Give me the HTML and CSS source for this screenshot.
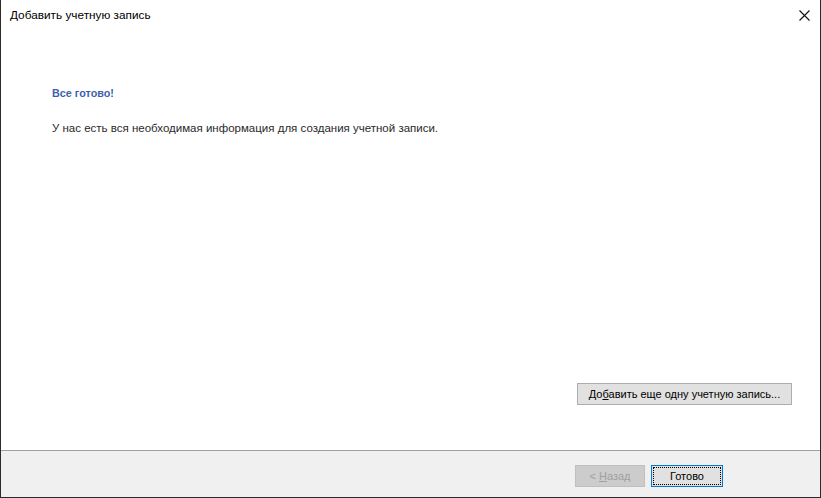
FILE: index.html
```html
<!DOCTYPE html>
<html lang="ru">
<head>
<meta charset="utf-8">
<link rel="stylesheet" href="styles.css">
</head>
<body>
<div class="window">
  <div class="titlebar">
    <span class="title">Добавить учетную запись</span>
    <span class="close"><svg width="11" height="11" viewBox="0 0 11 11"><path d="M0.5 0.5 L10.5 10.5 M10.5 0.5 L0.5 10.5" stroke="#111" stroke-width="1.1" fill="none"/></svg></span>
  </div>
  <div class="content">
    <div class="heading">Все готово!</div>
    <div class="text">У нас есть вся необходимая информация для создания учетной записи.</div>
    <div class="spacer"></div>
    <div class="addrow">
      <button class="btn add">До<u>б</u>авить еще одну учетную запись...</button>
    </div>
  </div>
  <div class="footer">
    <button class="btn back" disabled>&lt; <u>Н</u>азад</button>
    <button class="btn done"><span class="focus">Готово</span></button>
  </div>
</div>
</body>
</html>
```
FILE: styles.css
```css
* { box-sizing: border-box; }
html, body { margin: 0; padding: 0; }
body {
  width: 821px;
  height: 498px;
  font-family: "Segoe UI", "Open Sans", "Noto Sans", sans-serif;
  font-size: 12px;
  color: #000;
  background: #fff;
}
.window {
  width: 821px;
  height: 498px;
  border-left: 1px solid #2b2b2b;
  border-right: 1px solid #2b2b2b;
  border-bottom: 1px solid #2b2b2b;
  display: flex;
  flex-direction: column;
  background: #fff;
}
.titlebar {
  height: 32px;
  display: flex;
  align-items: center;
  justify-content: space-between;
  padding: 0 10px 0 9px;
}
.title {
  font-family: "Liberation Sans", sans-serif;
  font-size: 11.8px;
  margin-top: -2px;
}
.close { display: flex; margin-top: -2px; margin-right: 0; }
.content {
  flex: 1;
  display: flex;
  flex-direction: column;
  padding: 53px 28px 45px 51px;
  border-bottom: 1px solid #a0a0a0;
}
.heading {
  font-family: "Liberation Sans", sans-serif;
  font-weight: bold;
  font-size: 10.8px;
  color: #3f5fae;
  line-height: 16px;
}
.text {
  font-family: "Liberation Sans", sans-serif;
  font-size: 11.5px;
  margin-top: 19px;
  line-height: 16px;
  color: #2a2a2a;
}
.spacer { flex: 1; }
.addrow { display: flex; justify-content: flex-end; }
.btn {
  font-family: "Liberation Sans", sans-serif;
  font-size: 11px;
  height: 22px;
  background: #e1e1e1;
  border: 1px solid #adadad;
  color: #000;
  padding: 0;
  margin: 0;
}
.btn u { text-decoration: underline; }
.add { width: 215px; }
.footer {
  height: 46px;
  background: #f0f0f0;
  display: flex;
  align-items: flex-start;
  justify-content: flex-end;
  padding: 14px 97px 0 0;
  gap: 6px;
}
.back {
  width: 70px;
  background: #cccccc;
  border-color: #bfbfbf;
  color: #a0a0a0;
}
.done {
  width: 72px;
  border: 1px solid #0078d7;
  padding: 1px;
}
.done .focus {
  display: flex;
  align-items: center;
  justify-content: center;
  width: 100%;
  height: 100%;
  border: 1px dotted #000;
}
```
